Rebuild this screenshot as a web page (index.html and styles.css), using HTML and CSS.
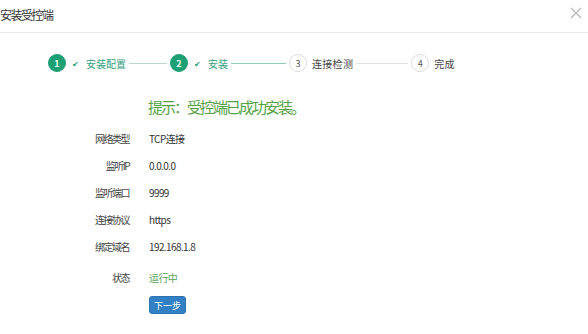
FILE: index.html
```html
<!DOCTYPE html>
<html lang="zh-CN">
<head>
    <meta charset="UTF-8">
    <title>安装受控端</title>
    <link rel="stylesheet" href="styles.css">
</head>
<body>

<div class="dialog">
    <div class="dialog-header">
        <span class="dialog-title">安装受控端</span>
        <span class="close">
            <svg width="12" height="12" viewBox="0 0 12 12"><path d="M1 1L11 11M11 1L1 11" stroke="#b5b5b5" stroke-width="1.2" fill="none"/></svg>
        </span>
    </div>

    <div class="steps">
        <div class="step done">
            <span class="num">1</span>
            <span class="check">&#10004;</span>
            <span class="label">安装配置</span>
        </div>
        <span class="line done-line"></span>
        <div class="step done">
            <span class="num">2</span>
            <span class="check">&#10004;</span>
            <span class="label">安装</span>
        </div>
        <span class="line active-line"></span>
        <div class="step">
            <span class="num">3</span>
            <span class="label">连接检测</span>
        </div>
        <span class="line last-line"></span>
        <div class="step">
            <span class="num">4</span>
            <span class="label">完成</span>
        </div>
    </div>

    <div class="tip">提示：受控端已成功安装。</div>

    <div class="info">
        <div class="row"><span class="key">网络类型</span><span class="val">TCP连接</span></div>
        <div class="row"><span class="key">监听IP</span><span class="val">0.0.0.0</span></div>
        <div class="row"><span class="key">监听端口</span><span class="val">9999</span></div>
        <div class="row"><span class="key">连接协议</span><span class="val">https</span></div>
        <div class="row"><span class="key">绑定域名</span><span class="val">192.168.1.8</span></div>
        <div class="row"><span class="key">状态</span><span class="val running">运行中</span></div>
    </div>

    <div class="actions">
        <button class="btn-next">下一步</button>
    </div>
</div>

</body>
</html>
```

FILE: styles.css
```css
body {
    margin: 0;
    background: #fff;
    font-family: "Microsoft YaHei", "Noto Sans CJK SC", sans-serif;
    color: #333;
}

.dialog {
    width: 588px;
    height: 334px;
    overflow: hidden;
}

.dialog-header {
    height: 33px;
    border-bottom: 1px solid #e8e8e8;
    display: flex;
    align-items: center;
    justify-content: space-between;
    padding-right: 6px;
    box-sizing: border-box;
}

.dialog-title {
    font-size: 12px;
    letter-spacing: -1.5px;
    color: #333;
    margin-top: -4px;
}

.close {
    display: flex;
    margin-top: -6px;
}

.steps {
    display: flex;
    align-items: center;
    padding-left: 48px;
    margin-top: 20px;
    height: 20px;
}

.step {
    display: flex;
    align-items: center;
    font-size: 10px;
    color: #444;
}

.num {
    width: 16px;
    height: 16px;
    border-radius: 50%;
    border: 1px solid #ddd;
    background: #fff;
    color: #555;
    font-size: 9px;
    display: flex;
    align-items: center;
    justify-content: center;
}

.step.done .num {
    background: #1e9f74;
    border-color: #1e9f74;
    color: #fff;
    font-weight: bold;
}

.check {
    color: #1e9f74;
    font-size: 8px;
    margin-left: 6px;
}

.step .label {
    margin-left: 5px;
    letter-spacing: 0.3px;
}

.step.done .label {
    margin-left: 7px;
    letter-spacing: 0;
    color: #33a07c;
}

.line {
    height: 1px;
    background: #e2e2e2;
    margin: 0 3px;
}

.done-line {
    width: 38px;
    background: #b8d8cc;
}

.active-line {
    width: 55px;
    background: #8fcbb8;
}

.last-line {
    width: 52px;
}

.tip {
    margin: 23px 0 0 148px;
    font-size: 15px;
    letter-spacing: -2px;
    color: #55a245;
    line-height: 22px;
}

.info {
    margin-top: 7px;
}

.row {
    display: flex;
    align-items: center;
    height: 27px;
    font-size: 10px;
}

.key {
    width: 129px;
    text-align: right;
    letter-spacing: -1.5px;
    color: #444;
}

.val {
    margin-left: 20px;
    letter-spacing: -0.6px;
    color: #333;
}

.val.running {
    color: #5aa35a;
}

.row:last-child {
    height: 34px;
}

.actions {
    display: flex;
    padding-left: 149px;
    margin-top: 2px;
}

.btn-next {
    width: 37px;
    height: 18px;
    padding: 0;
    border: 1px solid #2a72b0;
    border-radius: 3px;
    background: #3381c4;
    color: #fff;
    font-family: inherit;
    font-size: 9px;
}
```
